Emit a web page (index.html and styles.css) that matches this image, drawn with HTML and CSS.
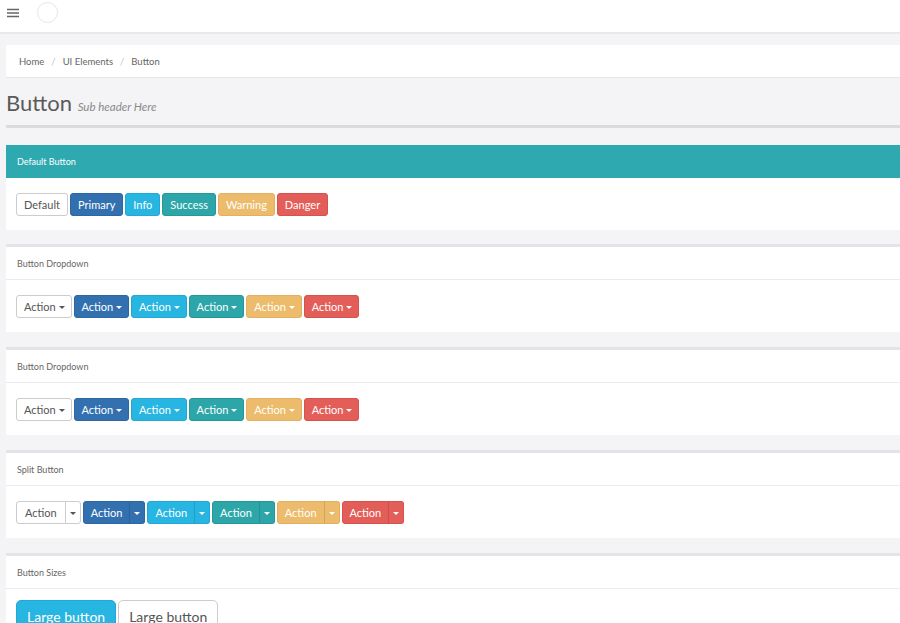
FILE: index.html
```html
<!DOCTYPE html>
<html lang="en">
<head>
    <meta charset="UTF-8">
    <title>Button</title>
    <link rel="stylesheet" href="styles.css">
</head>
<body>
    <div class="navbar">
        <svg class="menu-icon" width="14" height="10" viewBox="0 0 14 10">
            <path d="M1 1.5h12M1 5h12M1 8.5h12" stroke="#666" stroke-width="1.3" fill="none"/>
        </svg>
        <div class="avatar"></div>
    </div>

    <div class="content">
        <div class="breadcrumb">
            <span>Home</span><span class="sep">/</span>
            <span>UI Elements</span><span class="sep">/</span>
            <span>Button</span>
        </div>

        <h1 class="page-title">Button <small>Sub header Here</small></h1>
        <div class="rule"></div>

        <!-- plain buttons -->
        <div class="panel panel-teal">
            <div class="panel-heading">Default Button</div>
            <div class="panel-body">
                <button class="btn btn-default">Default</button>
                <button class="btn btn-primary">Primary</button>
                <button class="btn btn-info">Info</button>
                <button class="btn btn-success">Success</button>
                <button class="btn btn-warning">Warning</button>
                <button class="btn btn-danger">Danger</button>
            </div>
        </div>

        <div class="panel">
            <div class="panel-heading">Button Dropdown</div>
            <div class="panel-body">
                <button class="btn btn-default dd">Action <span class="caret"></span></button>
                <button class="btn btn-primary dd">Action <span class="caret"></span></button>
                <button class="btn btn-info dd">Action <span class="caret"></span></button>
                <button class="btn btn-success dd">Action <span class="caret"></span></button>
                <button class="btn btn-warning dd">Action <span class="caret"></span></button>
                <button class="btn btn-danger dd">Action <span class="caret"></span></button>
            </div>
        </div>

        <div class="panel">
            <div class="panel-heading">Button Dropdown</div>
            <div class="panel-body">
                <button class="btn btn-default dd">Action <span class="caret"></span></button>
                <button class="btn btn-primary dd">Action <span class="caret"></span></button>
                <button class="btn btn-info dd">Action <span class="caret"></span></button>
                <button class="btn btn-success dd">Action <span class="caret"></span></button>
                <button class="btn btn-warning dd">Action <span class="caret"></span></button>
                <button class="btn btn-danger dd">Action <span class="caret"></span></button>
            </div>
        </div>

        <div class="panel">
            <div class="panel-heading">Split Button</div>
            <div class="panel-body">
                <div class="btn-group">
                    <button class="btn btn-default split">Action</button><button class="btn btn-default toggle"><span class="caret"></span></button>
                </div>
                <div class="btn-group">
                    <button class="btn btn-primary split">Action</button><button class="btn btn-primary toggle"><span class="caret"></span></button>
                </div>
                <div class="btn-group">
                    <button class="btn btn-info split">Action</button><button class="btn btn-info toggle"><span class="caret"></span></button>
                </div>
                <div class="btn-group">
                    <button class="btn btn-success split">Action</button><button class="btn btn-success toggle"><span class="caret"></span></button>
                </div>
                <div class="btn-group">
                    <button class="btn btn-warning split">Action</button><button class="btn btn-warning toggle"><span class="caret"></span></button>
                </div>
                <div class="btn-group">
                    <button class="btn btn-danger split">Action</button><button class="btn btn-danger toggle"><span class="caret"></span></button>
                </div>
            </div>
        </div>

        <div class="panel">
            <div class="panel-heading">Button Sizes</div>
            <div class="panel-body sizes">
                <button class="btn btn-info btn-lg">Large button</button>
                <button class="btn btn-default btn-lg">Large button</button>
            </div>
        </div>
    </div>
</body>
</html>
```

FILE: styles.css
```css
body {
    margin: 0;
    background-color: #f4f3f6;
    font-family: Lato, "Open Sans", sans-serif;
    color: #555;
    overflow: hidden;
}

.navbar {
    height: 32px;
    background-color: white;
    border-bottom: 2px solid #e9e8ec;
    display: flex;
    align-items: center;
    padding-left: 6px;
}

.menu-icon {
    margin-top: -6px;
}

.avatar {
    width: 19px;
    height: 19px;
    border: 1px solid #e6e6e8;
    border-radius: 50%;
    margin-left: 17px;
    margin-top: -7px;
}

.content {
    padding: 11px 0 0 6px;
}

.breadcrumb {
    background-color: white;
    height: 32px;
    border-bottom: 1px solid #e6e5e9;
    display: flex;
    align-items: center;
    padding-left: 13px;
    font-size: 9.5px;
    color: #666;
}

.breadcrumb .sep {
    color: #c4c4c4;
    padding: 0 7px;
}

.page-title {
    margin: 12px 0 0;
    font-size: 22px;
    font-weight: 400;
    color: #5a5a5a;
    line-height: 26px;
}

.page-title small {
    font-size: 11.5px;
    font-style: italic;
    color: #8a8a8a;
}

.rule {
    height: 3px;
    background-color: #dcdadf;
    margin-top: 5px;
    margin-bottom: 17px;
}

.panel {
    background-color: white;
    border-top: 3px solid #e4e3e7;
    margin-bottom: 15px;
}

.panel-heading {
    height: 32px;
    display: flex;
    align-items: center;
    padding-left: 11px;
    font-size: 9px;
    color: #666;
    border-bottom: 1px solid #ebeaee;
}

.panel-teal {
    border-top: 0;
    margin-bottom: 14px;
}

.panel-teal .panel-heading {
    height: 33px;
    background-color: #2ea9b0;
    color: white;
    border-bottom: 0;
}

.panel-body {
    height: 52px;
    box-sizing: border-box;
    padding: 0 10px;
    display: flex;
    align-items: center;
    gap: 2px;
}

.panel-body.sizes {
    height: auto;
    align-items: flex-start;
    padding: 11px 10px 15px;
}

.btn {
    font-family: inherit;
    font-size: 11px;
    height: 23px;
    padding: 0 7px;
    border: 1px solid transparent;
    border-radius: 3px;
    color: white;
    cursor: pointer;
}

.btn-default {
    background-color: white;
    border-color: #ccc;
    color: #555;
}

.btn-primary {
    background-color: #3270b0;
    border-color: #2d66a0;
}

.btn-info {
    background-color: #27b5e1;
    border-color: #22a8d2;
}

.btn-success {
    background-color: #2ca6a8;
    border-color: #27989a;
}

.btn-warning {
    background-color: #ecbb6b;
    border-color: #e2b060;
}

.btn-danger {
    background-color: #e35d59;
    border-color: #d5524e;
}

.dd {
    padding: 0 6px 0 7px;
}

.caret {
    display: inline-block;
    width: 0;
    height: 0;
    border-top: 3px solid;
    border-left: 3px solid transparent;
    border-right: 3px solid transparent;
    vertical-align: middle;
}

.btn-group {
    display: flex;
}

.btn-group .split {
    border-radius: 3px 0 0 3px;
    padding: 0 7px;
}

.btn-group .btn-default.split {
    padding: 0 8px;
}

.btn-group .toggle {
    border-radius: 0 3px 3px 0;
    padding: 0 4px;
    border-left-color: rgba(0, 0, 0, 0.12);
    margin-left: -1px;
}

.btn-default.toggle {
    border-left-color: #ccc;
}

.btn-lg {
    height: 32px;
    font-size: 14px;
    padding: 0 10px;
    border-radius: 5px;
}
```
